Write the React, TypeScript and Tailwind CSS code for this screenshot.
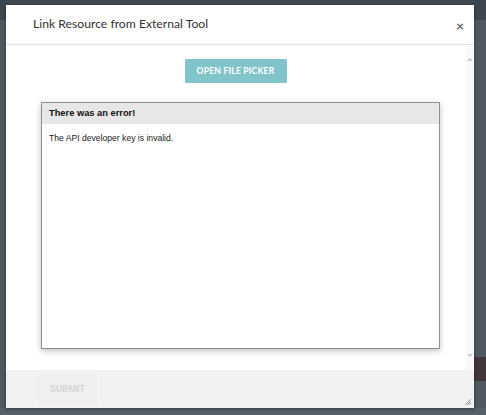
import React from "react";

export default function App() {
  return (
    <div className="relative w-[486px] h-[415px] overflow-hidden bg-[#4f5861]" style={{ fontFamily: "Lato, 'Liberation Sans', sans-serif" }}>
      {/* backdrop decorations */}
      <div className="absolute left-0 top-0 w-full h-[20px] bg-[#3d4651]" />
      <div className="absolute right-0 top-[357px] w-[12px] h-[24px] bg-[#3f373c]" />
      <div className="absolute left-0 bottom-0 w-full h-[7px] bg-[#56606a]" />

      <div className="relative ml-[6px] mt-[5px] w-[468px] h-[403px] bg-white flex flex-col shadow-[0_1px_3px_rgba(0,0,0,0.4)]">
        {/* header */}
        <div className="h-[40px] shrink-0 flex items-center justify-between border-b border-[#e3e3e3] pl-[27px] pr-[10px]">
          <span className="text-[12.2px] text-[#333]">Link Resource from External Tool</span>
          <span className="text-[14px] font-bold text-[#666] leading-none mt-[3px]">×</span>
        </div>

        {/* body */}
        <div className="flex-1 flex min-h-0">
          <div className="flex-1 flex flex-col items-center pt-[14px]">
            <button className="w-[102px] h-[24px] bg-[#81c5ca] text-white text-[8.6px] font-bold tracking-[0.2px] rounded-[1px]">
              OPEN FILE PICKER
            </button>
            <div className="self-start ml-[35px] mt-[19px] w-[399px] h-[247px] border border-[#8f8f8f] bg-white shadow-[0_2px_6px_rgba(0,0,0,0.25)] flex flex-col" style={{ fontFamily: "'Liberation Sans', Arial, sans-serif" }}>
              <div className="h-[21px] bg-[#e7e7e7] flex items-center px-[7px] text-[9.3px] font-bold text-[#111]">
                There was an error!
              </div>
              <div className="px-[7px] pt-[8px] text-[8.6px] text-[#222]">The API developer key is invalid.</div>
            </div>
          </div>
          {/* scrollbar */}
          <div className="w-[9px] bg-[#f9f9f9] flex flex-col items-center justify-between py-[13px]">
            <div className="w-0 h-0 border-l-[3px] border-r-[3px] border-b-[3px] border-l-transparent border-r-transparent border-b-[#c8c8c8]" />
            <div className="w-0 h-0 border-l-[3px] border-r-[3px] border-t-[3px] border-l-transparent border-r-transparent border-t-[#c8c8c8]" />
          </div>
        </div>

        {/* footer */}
        <div className="relative h-[38px] shrink-0 bg-[#f2f2f2] flex items-start pl-[32px] pt-[3px]">
          <div className="w-[59px] h-[32px] bg-[#efefef] flex items-center justify-center text-[9.5px] font-bold text-[#d6d6d6]" style={{ fontFamily: "Roboto, 'Liberation Sans', sans-serif" }}>
            SUBMIT
          </div>
          <svg className="absolute right-[2px] bottom-[2px]" width="8" height="8" viewBox="0 0 8 8">
            <path d="M7 1 L1 7 M7 3 L3 7 M7 5 L5 7" stroke="#999" strokeWidth="1" />
          </svg>
        </div>
      </div>
    </div>
  );
}
